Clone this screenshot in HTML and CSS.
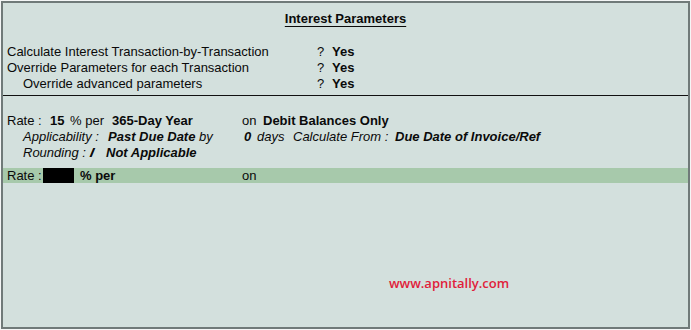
FILE: index.html
```html
<!DOCTYPE html>
<html lang="en">
<head>
    <meta charset="UTF-8">
    <title>Interest Parameters</title>
    <link rel="stylesheet" href="styles.css">
</head>
<body>
    <div class="frame">
        <div class="title"><span>Interest Parameters</span></div>

        <div class="params">
            <div class="prow">
                <span class="plabel">Calculate Interest Transaction-by-Transaction</span>
                <span class="q">?</span><b>Yes</b>
            </div>
            <div class="prow">
                <span class="plabel">Override Parameters for each Transaction</span>
                <span class="q">?</span><b>Yes</b>
            </div>
            <div class="prow sub">
                <span class="plabel">Override advanced parameters</span>
                <span class="q">?</span><b>Yes</b>
            </div>
        </div>

        <div class="sep"></div>

        <div class="rates">
            <div class="rrow">
                <span class="c-label">Rate :</span>
                <b class="c-rate">15</b>
                <span class="c-per">% per</span>
                <b class="c-year">365-Day Year</b>
                <span class="c-on">on</span>
                <b>Debit Balances Only</b>
            </div>
            <div class="rrow it">
                <span class="c-appl">Applicability :</span>
                <b class="c-due">Past Due Date</b>
                <span class="c-by">by</span>
                <b class="c-days">0</b>
                <span class="c-dword">days</span>
                <span class="c-calc">Calculate From :</span>
                <b>Due Date of Invoice/Ref</b>
            </div>
            <div class="rrow it">
                <span class="c-round">Rounding :</span>
                <b class="c-mark">//</b>
                <b>Not Applicable</b>
            </div>
        </div>

        <div class="rrow active">
            <span class="c-label2">Rate :</span>
            <span class="cursor"></span>
            <b class="c-per2">% per</b>
            <span>on</span>
        </div>

        <div class="brand">www.apnitally.com</div>
    </div>
</body>
</html>
```

FILE: styles.css
```css
*{
    margin:0;
    padding:0;
    box-sizing:border-box;
}
body{
    background:#f4f6f6;
    font-family:"Liberation Sans", Arial, sans-serif;
    font-size:13px;
    color:#0a0a0a;
}
.frame{
    width:689px;
    height:328px;
    margin:1px 0 0 1px;
    border:2px solid #707a79;
    background:#d3e0dd;
}

.title{
    text-align:center;
    padding-top:8px;
    height:41px;
    font-weight:bold;
}
.title span{
    text-decoration:underline;
    text-underline-offset:3px;
}

.params{
    padding-left:4px;
}
.prow{
    display:flex;
    height:16px;
    line-height:16px;
}
.plabel{
    width:310px;
}
.prow.sub .plabel{
    padding-left:16px;
}
.q{
    width:15px;
}

.sep{
    height:1px;
    background:#111;
    margin-top:3px;
}

.rates{
    padding:17px 0 0 4px;
}
.rrow{
    display:flex;
    height:16px;
    line-height:16px;
    white-space:nowrap;
}
.rrow.it{
    font-style:italic;
    padding-left:16px;
}
.c-label{ width:43px; }
.c-rate{ width:20px; }
.c-per{ width:42px; }
.c-year{ width:130px; }
.c-on{ width:21px; }

.c-appl{ width:85px; }
.c-due{ width:91px; }
.c-by{ width:45px; }
.c-days{ width:13px; }
.c-dword{ width:36px; }
.c-calc{ width:102px; }

.c-round{ width:67px; }
.c-mark{ width:16px; letter-spacing:-3px; }

.rrow.active{
    margin-top:7px;
    background:#a7c9ab;
    padding-left:4px;
    height:15px;
    line-height:15px;
}
.c-label2{ width:36px; }
.cursor{
    width:31px;
    height:15px;
    background:#000;
    margin-right:6px;
}
.c-per2{ width:162px; }

.brand{
    margin:91px 0 0 386px;
    font-family:"Open Sans", sans-serif;
    font-weight:600;
    font-size:13px;
    color:#e0203a;
}
```
